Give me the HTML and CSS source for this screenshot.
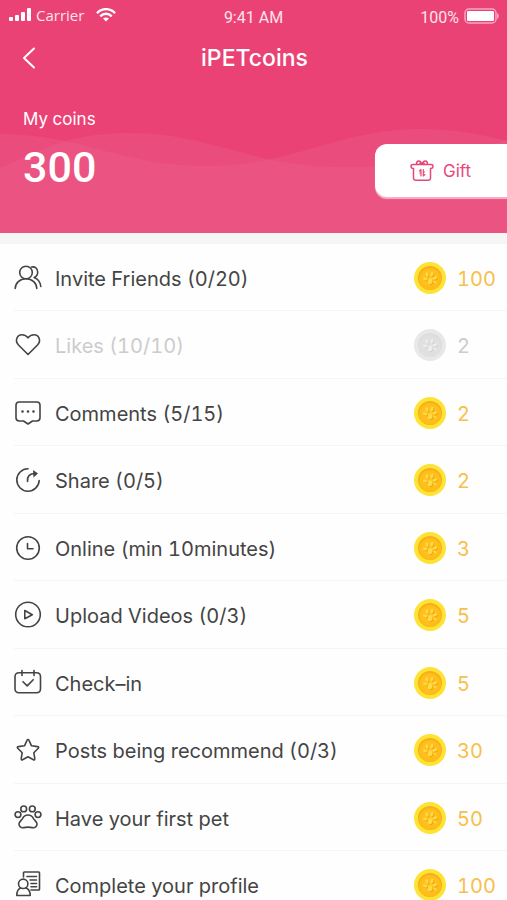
FILE: index.html
```html
<!DOCTYPE html>
<html lang="en">
<head>
<meta charset="utf-8">
<meta name="viewport" content="width=device-width, initial-scale=1">
<title>iPETcoins</title>
<link rel="stylesheet" href="styles.css">
</head>
<body>
<svg class="defs" aria-hidden="true">
  <defs>
    <radialGradient id="gold" cx="50%" cy="45%" r="60%">
      <stop offset="0" stop-color="#ffc929"/><stop offset="1" stop-color="#fdb913"/>
    </radialGradient>
    <symbol id="coin" viewBox="0 0 32 32">
      <circle class="rim" cx="16" cy="16" r="16"/>
      <circle class="edge" cx="16" cy="16" r="12"/>
      <circle class="face" cx="16" cy="17" r="11"/>
      <g class="shade" transform="translate(1 1)">
        <path d="M15 17c2-1.500 4 0 3.500 2 0 2-1.500 3.500-3 3.200-1.500-.3-2.500-3.200-.5-5.200z"/>
        <ellipse cx="11" cy="17" rx="2.200" ry="1.200" transform="rotate(20 11 17)"/>
        <ellipse cx="13" cy="12.500" rx="1.300" ry="2.200" transform="rotate(-20 13 12.500)"/>
        <ellipse cx="18" cy="12" rx="1.300" ry="2.300" transform="rotate(15 18 12)"/>
        <ellipse cx="21" cy="16" rx="2.400" ry="1.200" transform="rotate(-20 21 16)"/>
      </g>
      <g class="paw">
        <path d="M15 17c2-1.500 4 0 3.500 2 0 2-1.500 3.500-3 3.200-1.500-.3-2.500-3.200-.5-5.200z"/>
        <ellipse cx="11" cy="17" rx="2.200" ry="1.200" transform="rotate(20 11 17)"/>
        <ellipse cx="13" cy="12.500" rx="1.300" ry="2.200" transform="rotate(-20 13 12.500)"/>
        <ellipse cx="18" cy="12" rx="1.300" ry="2.300" transform="rotate(15 18 12)"/>
        <ellipse cx="21" cy="16" rx="2.400" ry="1.200" transform="rotate(-20 21 16)"/>
        <ellipse cx="21" cy="20" rx="1.800" ry="1" transform="rotate(30 21 20)"/>
      </g>
    </symbol>
  </defs>
</svg>

<header class="hero">
  <svg class="waves" viewBox="0 0 507 233" preserveAspectRatio="none" aria-hidden="true">
    <path d="M0 134C40 134 70 142 105 151S165 166 210 166C290 166 340 129 420 129C455 129 480 134 507 141V233H0z"/>
    <path d="M0 168C35 155 60 133 130 133C210 133 250 167 345 167C400 167 450 160 507 140V233H0z"/>
  </svg>

  <div class="status">
    <div class="status-left">
      <svg width="24" height="14" viewBox="0 0 24 14" fill="#fff" aria-hidden="true">
        <rect x="1" y="9" width="4" height="4" rx="1"/><rect x="7" y="7" width="4" height="6" rx="1"/><rect x="13" y="4" width="4" height="9" rx="1"/><rect x="19" y="0" width="4" height="13" rx="1"/>
      </svg>
      <span class="carrier">Carrier</span>
      <svg class="wifi" width="20" height="14" viewBox="0 0 20 14" fill="none" stroke="#fff" stroke-width="2.400" aria-hidden="true">
        <path d="M1 5.200C6-.2 14-.2 19 5.200M4.300 8.300c3.300-3.400 8.100-3.400 11.400 0"/>
        <path d="M10 13.500l-3-3c1.800-1.500 4.200-1.500 6 0z" fill="#fff" stroke="none"/>
      </svg>
    </div>
    <span class="time">9:41 AM</span>
    <div class="status-right">
      <span>100%</span>
      <svg width="36" height="16" viewBox="0 0 36 16" aria-hidden="true">
        <rect x="2" y="1" width="31" height="14" rx="4" fill="none" stroke="#f7a5bf" stroke-width="1.500"/>
        <rect x="4" y="3" width="27" height="10" rx="1" fill="#fff"/>
        <path d="M34 5c2.500 1 2.500 5 0 6z" fill="#f7a5bf"/>
      </svg>
    </div>
  </div>

  <nav class="bar">
    <button class="back" type="button" aria-label="Back">
      <svg width="14" height="22" viewBox="0 0 14 22" fill="none" stroke="#fff" stroke-width="2" stroke-linecap="round" stroke-linejoin="round"><path d="M12 1.500L2 11l10 9.500"/></svg>
    </button>
    <h1>iPETcoins</h1>
  </nav>

  <div class="balance">
    <div>
      <p class="label">My coins</p>
      <p class="total">300</p>
    </div>
    <button class="gift" type="button">
      <svg width="24" height="24" viewBox="0 0 24 24" fill="none" stroke="#e5487a" stroke-width="1.500" stroke-linejoin="round" stroke-linecap="round" aria-hidden="true">
        <path d="M3.500 9.500C1.700 9.500 1 8.500 1 7.200S1.700 5.500 3 5.500h18c1.300 0 2 .5 2 1.700s-.7 2.300-2.500 2.300V19c0 1.500-.8 2.300-2.300 2.300H5.800c-1.500 0-2.300-.8-2.300-2.300z"/>
        <path d="M6.500 5.300C6.500 1 10.500.8 12 5.300 13.500.8 17.500 1 17.500 5.300M9.500 5.300c.6-1.600 1.600-1.600 2.500 0 .9-1.600 1.900-1.600 2.500 0"/>
        <path d="M11 17v-6.500l-1.500 1.500M11 14H9.700M13.300 10.500V17l1.500-1.500M13.300 13h1.300" stroke-width="1.200"/>
      </svg>
      <span>Gift</span>
    </button>
  </div>
</header>

<main>
  <ul class="tasks">
    <li>
      <svg class="icon" viewBox="0 0 28 28"><circle cx="12" cy="8.500" r="6.300"/><path d="M1.200 24.500c.2-5.500 4.500-9.700 10.800-9.700s10.600 4.200 10.800 9.700M17.500 3c3.500-.8 6.200 1.500 6.200 5 0 2.700-1.500 4.700-3.600 5.500 3.800 1.400 6.200 4.500 6.700 9"/></svg>
      <span class="name">Invite Friends (0/20)</span>
      <svg class="coin"><use href="#coin"/></svg><span class="value">100</span>
    </li>
    <li class="done">
      <svg class="icon" viewBox="0 0 28 28"><path d="M14 23.500L4.500 14C.500 9.500 3 3.700 8 3.700c2.700 0 4.700 1.300 6 3.200 1.300-1.900 3.300-3.200 6-3.200 5 0 7.500 5.800 3.500 10.300z"/></svg>
      <span class="name">Likes (10/10)</span>
      <svg class="coin"><use href="#coin"/></svg><span class="value">2</span>
    </li>
    <li>
      <svg class="icon" viewBox="0 0 28 28"><path d="M5.200 3h17.600c2 0 3.200 1.200 3.200 3.200v12.600c0 2-1.200 3.200-3.200 3.200h-4.300L14 25l-4.500-3H5.200C3.200 22 2 20.800 2 18.800V6.200C2 4.200 3.200 3 5.200 3z"/><path class="dots" d="M8.500 12.500h.01M14 12.500h.01M19.500 12.500h.01"/></svg>
      <span class="name">Comments (5/15)</span>
      <svg class="coin"><use href="#coin"/></svg><span class="value">2</span>
    </li>
    <li>
      <svg class="icon" viewBox="0 0 28 28"><path d="M14 2.800a11.200 11.200 0 1 0 11.200 11.700"/><path d="M13.500 15.500c-.5-5 2-8 7.500-8"/><path class="solid" d="M19 4l5 3.500-4.500 4z"/></svg>
      <span class="name">Share (0/5)</span>
      <svg class="coin"><use href="#coin"/></svg><span class="value">2</span>
    </li>
    <li>
      <svg class="icon" viewBox="0 0 28 28"><circle cx="14" cy="14" r="11.300"/><path d="M13.500 9.500v5.200h5.500"/></svg>
      <span class="name">Online (min 10minutes)</span>
      <svg class="coin"><use href="#coin"/></svg><span class="value">3</span>
    </li>
    <li>
      <svg class="icon" viewBox="0 0 28 28"><circle cx="14" cy="13.500" r="12.300"/><path d="M10.800 9.500v8.300l7.500-4.100z"/></svg>
      <span class="name">Upload Videos (0/3)</span>
      <svg class="coin"><use href="#coin"/></svg><span class="value">5</span>
    </li>
    <li>
      <svg class="icon" viewBox="0 0 28 28"><path d="M5 3.800h17.500c2.500 0 4 1.500 4 4v12c0 2.500-1.500 4-4 4H5c-2.500 0-4-1.500-4-4v-12c0-2.500 1.500-4 4-4zM8 1.500v5M20 1.500v5M9 12.700l4.200 4.200 6-6.200"/></svg>
      <span class="name">Check–in</span>
      <svg class="coin"><use href="#coin"/></svg><span class="value">5</span>
    </li>
    <li>
      <svg class="icon" viewBox="0 0 28 28"><path d="M14 3.500c.5 0 .8.300 1 .8l2.500 5.500 6.200.8c1 .1 1.300 1 .6 1.700l-4.500 4.400 1 6c.2 1-.6 1.500-1.400 1L14 20.800l-5.400 2.900c-.8.500-1.600 0-1.400-1l1-6-4.500-4.400c-.7-.7-.4-1.600.6-1.700l6.200-.8L13 4.300c.2-.5.500-.8 1-.8z"/></svg>
      <span class="name">Posts being recommend (0/3)</span>
      <svg class="coin"><use href="#coin"/></svg><span class="value">30</span>
    </li>
    <li>
      <svg class="icon" viewBox="0 0 28 28"><circle cx="9.700" cy="4.900" r="2.900"/><circle cx="18.300" cy="4.900" r="2.900"/><circle cx="4" cy="10.600" r="2.900"/><circle cx="24" cy="10.600" r="2.900"/><path d="M14 11c3 0 4.500 1.600 5.500 3.600.9 1.700 3.500 2.900 3.500 5.400 0 2.700-2 4-4.500 3.600-3-.7-6-.7-9 0C7 24 5 22.700 5 20c0-2.500 2.600-3.700 3.500-5.400C9.500 12.600 11 11 14 11z"/></svg>
      <span class="name">Have your first pet</span>
      <svg class="coin"><use href="#coin"/></svg><span class="value">50</span>
    </li>
    <li>
      <svg class="icon" viewBox="0 0 28 28"><path d="M9.500 6V1.800c0-.5.300-.8.800-.8h14.400c.5 0 .8.300.8.800v16.400c0 .5-.3.800-.8.800H17M13 5.500h9.500M16 9h6.500M17 12.500h5.500M17 15.800h5.500"/><circle cx="9.200" cy="12.800" r="4.700"/><path d="M6.500 17c-2.500 1-3.700 3.500-3.700 7.500h13.400c0-4-1.500-6.500-4-7.500"/></svg>
      <span class="name">Complete your profile</span>
      <svg class="coin"><use href="#coin"/></svg><span class="value">100</span>
    </li>
  </ul>
</main>
</body>
</html>
```
FILE: styles.css
```css
* {
  box-sizing: border-box;
}

body {
  margin: 0;
  background: #fefefe;
  color: #444;
  font-family: Inter, "Liberation Sans", sans-serif;
  font-variant-numeric: tabular-nums;
}

h1,
p,
ul {
  margin: 0;
  padding: 0;
}

button {
  border: 0;
  font: inherit;
  cursor: pointer;
}

.defs {
  position: absolute;
  width: 0;
  height: 0;
}

.hero {
  position: relative;
  padding-bottom: 36px;
  background: #eb4275;
  color: #fff;
}

.waves {
  position: absolute;
  inset: 0;
  width: 100%;
  height: 100%;
  fill: #ea648e;
  fill-opacity: 0.32;
}

.status,
.bar,
.balance {
  position: relative;
}

.status {
  display: grid;
  grid-template-columns: 1fr auto 1fr;
  align-items: start;
  height: 32px;
  padding: 8px 8px 0;
  font-family: Roboto, sans-serif;
  font-size: 16px;
  line-height: 20px;
  color: #fde3eb;
}

.status-left,
.status-right {
  display: flex;
  align-items: flex-start;
}

.status-left {
  gap: 4px;
}

.status-right {
  justify-content: flex-end;
  gap: 4px;
}

.carrier {
  font-family: "Open Sans", sans-serif;
  font-size: 15px;
  line-height: 14px;
}

.wifi {
  margin-left: 8px;
}

.bar {
  display: grid;
  grid-template-columns: 58px 1fr 56px;
  align-items: center;
  height: 52px;
}

.back {
  display: flex;
  padding: 8px 22px;
  background: none;
}

h1 {
  text-align: center;
  font-size: 23px;
  line-height: 28px;
  font-weight: 500;
}

.balance {
  display: flex;
  justify-content: space-between;
  align-items: flex-end;
  padding: 24px 0 0 23px;
}

.label {
  font-size: 17px;
  line-height: 22px;
}

.total {
  margin: 10px 0 2px;
  font-family: Roboto, sans-serif;
  font-size: 43px;
  line-height: 55px;
  font-weight: 500;
}

.gift {
  display: flex;
  align-items: center;
  gap: 9px;
  width: 132px;
  height: 53px;
  padding: 0 0 0 35px;
  border-radius: 12px 0 0 12px;
  background: #fff;
  box-shadow: 0 2px 1px #f6b3c8;
  color: #e5487a;
  font-size: 17px;
}

main {
  border-top: 11px solid #f6f6f6;
}

.tasks {
  padding-left: 14px;
  list-style: none;
}

.tasks li {
  display: flex;
  align-items: center;
  height: 67px;
  padding-top: 1px;
  border-bottom: 1px solid #f5f5f5;
}

.tasks li:nth-child(even) {
  height: 68px;
}

.icon {
  flex: none;
  width: 28px;
  height: 28px;
  fill: none;
  stroke: #444;
  stroke-width: 1.6px;
  stroke-linecap: round;
  stroke-linejoin: round;
}

.icon .dots {
  stroke-width: 2.6px;
}

.icon .solid {
  fill: #444;
  stroke: none;
}

.name,
.value {
  padding-top: 2px;
  font-size: 20px;
  line-height: 28px;
}

.name {
  flex: 1;
  margin-left: 13px;
}

.coin {
  flex: none;
  width: 32px;
  height: 32px;
  --rim: #fde333;
  --edge: #f9ad1b;
  --face: url(#gold);
  --shade: #f5a514;
  --paw: #ffdc45;
}

.rim {
  fill: var(--rim);
}

.edge {
  fill: var(--edge);
}

.face {
  fill: var(--face);
}

.shade {
  fill: var(--shade);
}

.paw {
  fill: var(--paw);
}

.value {
  width: 50px;
  margin-left: 11px;
  color: #f7c04a;
}

.done .name,
.done .value {
  color: #ccc;
}

.done .coin {
  --rim: #e8e8e8;
  --edge: #dcdcdc;
  --face: #e0e0e0;
  --shade: #d3d3d3;
  --paw: #ededed;
}
```
